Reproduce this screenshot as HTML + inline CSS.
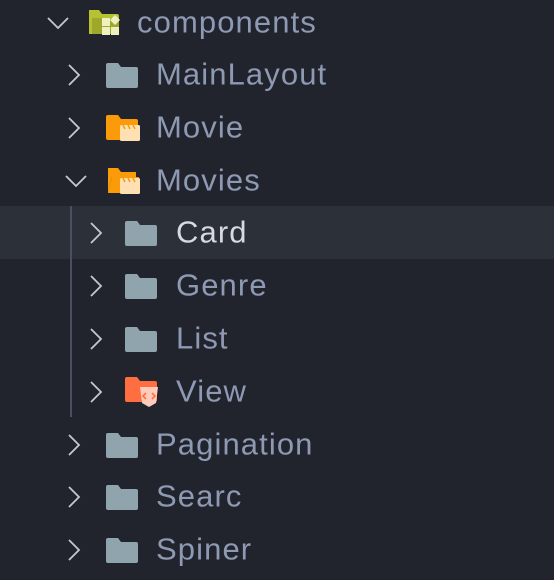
<!DOCTYPE html>
<html><head><meta charset="utf-8"><style>
body{margin:0;width:554px;height:580px;background:#21242c;overflow:hidden;font-family:"Liberation Sans",sans-serif;}
.row{position:absolute;left:0;width:554px;height:53px;}
.t{position:absolute;top:50%;transform:translateY(-52%);font-size:31px;color:#8e99b3;letter-spacing:1.1px;white-space:nowrap}
.ic{position:absolute;top:50%;transform:translateY(-50%)}
.ch{position:absolute;top:50%;transform:translateY(-50%)}
</style></head><body>
<div style="position:absolute;left:0;top:206px;width:554px;height:53px;background:#2c3039"></div>
<div style="position:absolute;left:70px;top:206px;width:2px;height:211px;background:#4a4f66"></div>

<svg width="0" height="0" style="position:absolute">
<defs>
<symbol id="f" viewBox="0 0 32 26"><path d="M2 1h10l3 4h15a2 2 0 0 1 2 2v17a2 2 0 0 1-2 2H2a2 2 0 0 1-2-2V3a2 2 0 0 1 2-2z" fill="#90a4ae"/></symbol>
<symbol id="r" viewBox="0 0 14 24"><path d="M2 2l10 10-10 10" fill="none" stroke="#c5c8ce" stroke-width="1.8"/></symbol>
<symbol id="d" viewBox="0 0 24 14"><path d="M2 2l10 10 10-10" fill="none" stroke="#c5c8ce" stroke-width="1.8"/></symbol>
</defs></svg>

<div class="row" style="top:-4px">
<svg class="ch" style="left:46px" width="24" height="14"><use href="#d"/></svg>
<svg class="ic" style="left:87px" width="36" height="30" viewBox="0 0 36 30"><path d="M2 2h10l3 4h15a2 2 0 0 1 2 2v18H2z" fill="#b6c232"/><path d="M5 10h27v16H5z" fill="#9ea82a"/><rect x="15" y="10" width="8" height="8" fill="#eef0c0"/><rect x="15" y="19" width="8" height="8" fill="#eef0c0"/><rect x="24" y="19" width="8" height="8" fill="#eef0c0"/><path d="M28 7l5 5-5 5-5-5z" fill="#eef0c0"/></svg>
<div class="t" style="left:137px">components</div></div>

<div class="row" style="top:48px">
<svg class="ch" style="left:67px" width="14" height="24"><use href="#r"/></svg>
<svg class="ic" style="left:106px" width="32" height="26"><use href="#f"/></svg>
<div class="t" style="left:156px">MainLayout</div></div>

<div class="row" style="top:101px">
<svg class="ch" style="left:67px" width="14" height="24"><use href="#r"/></svg>
<svg class="ic" style="left:106px" width="34" height="28" viewBox="0 0 34 28"><path d="M2 1h10l3 4h15a2 2 0 0 1 2 2v17a2 2 0 0 1-2 2H2a2 2 0 0 1-2-2V3a2 2 0 0 1 2-2z" fill="#fb9b0a"/><rect x="14" y="11" width="20" height="16" rx="1.5" fill="#ffe0b2"/><path d="M17 11l2 4M22 11l2 4M27 11l2 4" stroke="#fb9b0a" stroke-width="1.5"/></svg>
<div class="t" style="left:156px">Movie</div></div>

<div class="row" style="top:154px">
<svg class="ch" style="left:64px" width="24" height="14"><use href="#d"/></svg>
<svg class="ic" style="left:106px" width="34" height="28" viewBox="0 0 34 28"><path d="M2 1h10l3 4h15v5H6L2 26z" fill="#fb9b0a"/><path d="M6 10h27l-4 16H2z" fill="#fb9b0a"/><rect x="14" y="11" width="20" height="16" rx="1.5" fill="#ffe0b2"/><path d="M17 11l2 4M22 11l2 4M27 11l2 4" stroke="#fb9b0a" stroke-width="1.5"/></svg>
<div class="t" style="left:156px">Movies</div></div>

<div class="row" style="top:206px">
<svg class="ch" style="left:89px" width="14" height="24"><use href="#r"/></svg>
<svg class="ic" style="left:125px" width="32" height="26"><use href="#f"/></svg>
<div class="t" style="left:176px;color:#d7dae0">Card</div></div>

<div class="row" style="top:259px">
<svg class="ch" style="left:89px" width="14" height="24"><use href="#r"/></svg>
<svg class="ic" style="left:125px" width="32" height="26"><use href="#f"/></svg>
<div class="t" style="left:176px">Genre</div></div>

<div class="row" style="top:312px">
<svg class="ch" style="left:89px" width="14" height="24"><use href="#r"/></svg>
<svg class="ic" style="left:125px" width="32" height="26"><use href="#f"/></svg>
<div class="t" style="left:176px">List</div></div>

<div class="row" style="top:365px">
<svg class="ch" style="left:89px" width="14" height="24"><use href="#r"/></svg>
<svg class="ic" style="left:125px" width="36" height="32" viewBox="0 0 36 32"><path d="M2 1h10l3 4h15a2 2 0 0 1 2 2v17a2 2 0 0 1-2 2H2a2 2 0 0 1-2-2V3a2 2 0 0 1 2-2z" fill="#ff6e40"/><path d="M15 11h18l-2 16-7 4-7-4z" fill="#ffccbc"/><path d="M21 17l-3 3 3 3M27 17l3 3-3 3" fill="none" stroke="#ff6e40" stroke-width="1.6"/></svg>
<div class="t" style="left:176px">View</div></div>

<div class="row" style="top:418px">
<svg class="ch" style="left:67px" width="14" height="24"><use href="#r"/></svg>
<svg class="ic" style="left:106px" width="32" height="26"><use href="#f"/></svg>
<div class="t" style="left:156px">Pagination</div></div>

<div class="row" style="top:470px">
<svg class="ch" style="left:67px" width="14" height="24"><use href="#r"/></svg>
<svg class="ic" style="left:106px" width="32" height="26"><use href="#f"/></svg>
<div class="t" style="left:156px">Searc</div></div>

<div class="row" style="top:523px">
<svg class="ch" style="left:67px" width="14" height="24"><use href="#r"/></svg>
<svg class="ic" style="left:106px" width="32" height="26"><use href="#f"/></svg>
<div class="t" style="left:156px">Spiner</div></div>
</body></html>
